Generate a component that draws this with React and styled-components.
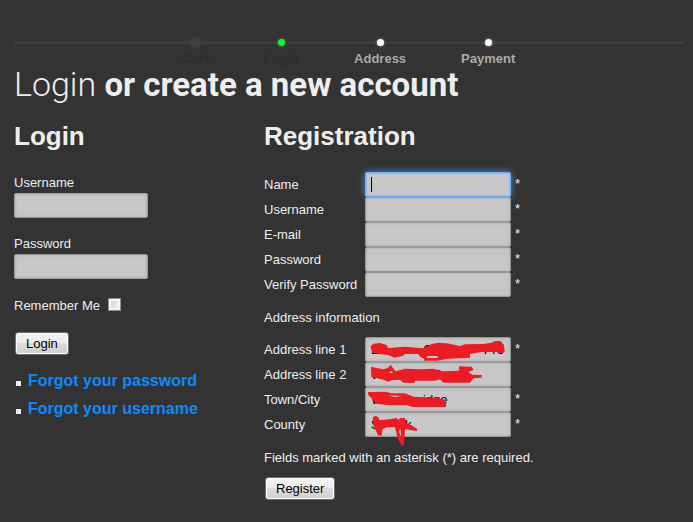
import React from 'react';
import styled, { createGlobalStyle, css } from 'styled-components';

const GlobalStyle = createGlobalStyle`
  * { box-sizing: border-box; }
  body {
    margin: 0;
    background: #333;
    color: #eee;
    font: 13px/16px "Liberation Sans", Arial, sans-serif;
  }
`;

const Page = styled.main`
  padding: 38px 9px 20px 14px;
`;

const Steps = styled.ol`
  list-style: none;
  margin: 0;
  padding: 0;
  display: flex;
  justify-content: center;
  gap: 55px;
  background: linear-gradient(#3a3a3a, #404040) 0 3px / 100% 3px no-repeat;
`;

const dots = {
  done: css`background: #404040; box-shadow: 0 0 0 2px #404040;`,
  current: css`background: #0f2; box-shadow: 0 0 3px #777;`,
  next: css`background: #fff; box-shadow: 0 0 3px #999;`,
};

const Step = styled.li`
  display: flex;
  flex-direction: column;
  align-items: center;
  gap: 6px;
  padding-top: 1px;
  font-weight: bold;
  line-height: 14px;
  color: ${(p) => (p.$state === 'next' ? '#aaa' : '#2e2e2e')};

  &::before {
    content: "";
    width: 7px;
    height: 7px;
    border-radius: 50%;
    ${(p) => dots[p.$state]}
  }
`;

const Title = styled.h1`
  margin: 0;
  font: bold 33px/36px Roboto, "Liberation Sans", sans-serif;
`;

const Thin = styled.span`
  font-weight: 300;
  font-size: 34px;
`;

const Columns = styled.div`
  display: grid;
  grid-template-columns: 250px 1fr;
  margin-top: 18px;
`;

const Heading = styled.h2`
  margin: 0 0 21px;
  font-size: 26px;
  line-height: 30px;
`;

const LoginForm = styled.form`
  padding-top: 3px;
`;

const Stacked = styled.div`
  display: flex;
  flex-direction: column;
  align-items: flex-start;
  gap: 2px;
  margin-bottom: 18px;
`;

const TextInput = styled.input`
  width: ${(p) => (p.$wide ? 146 : 134)}px;
  height: 25px;
  padding: 0 5px;
  border: 1px solid #999;
  border-radius: 2px;
  background: #c7c7c7;
  box-shadow: inset 0 0 3px #aaa;
  color: #000;
  font: inherit;
  outline: none;
  ${(p) => p.$active && css`
    border-color: #6ab4ff;
    box-shadow: inset 0 0 1px 1px #7fbcf8, 0 0 7px #4b8fd0;
  `}
`;

const Remember = styled.div`
  display: flex;
  align-items: flex-start;
  gap: 8px;
  padding-top: 1px;
  margin-bottom: 18px;
`;

const Checkbox = styled.input`
  appearance: none;
  width: 13px;
  height: 13px;
  margin: 0;
  border: 1px solid #8e8f8f;
  background: linear-gradient(135deg, #ccd0d5, #f6f6f6);
  box-shadow: inset 0 0 0 2px #f4f4f4;
`;

const Button = styled.button`
  display: block;
  margin: 1px;
  height: 23px;
  padding: 0 10px;
  border: 1px solid #707070;
  border-radius: 3px;
  background: linear-gradient(#f3f3f3 0%, #ebebeb 50%, #ddd 50%, #cfcfcf 100%);
  box-shadow: inset 0 0 0 1px #fcfcfc;
  color: #000;
  font: 13px/21px "Liberation Sans", Arial, sans-serif;
`;

const Links = styled.ul`
  list-style: none;
  margin: 12px 0 0;
  padding: 0;
  font-size: 16px;
  line-height: 28px;
  font-weight: bold;
`;

const LinkItem = styled.li`
  display: flex;
  align-items: center;
  gap: 7px;
  padding-left: 2px;

  &::before {
    content: "";
    width: 5px;
    height: 5px;
    margin-top: 4px;
    background: #eee;
  }
`;

const Link = styled.a`
  color: #0a8cff;
  text-decoration: none;
`;

const Fields = styled.div`
  position: relative;
`;

const Row = styled.div`
  display: grid;
  grid-template-columns: 101px auto 1fr;
  align-items: center;
  height: 25px;
`;

const Star = styled.span`
  padding-left: 4px;
  height: 16px;
  align-self: start;
  margin-top: 4px;
`;

const Caret = styled.span`
  position: absolute;
  left: 107px;
  top: 5px;
  width: 1px;
  height: 15px;
  background: #000;
`;

const Note = styled.p`
  margin: 13px 0 11px;
`;

const Scribble = styled.svg`
  position: absolute;
  left: 100px;
  top: -1px;
  pointer-events: none;
`;

function Field({ id, label, required, ...rest }) {
  return (
    <Row>
      <label htmlFor={id}>{label}</label>
      <TextInput id={id} $wide {...rest} />
      {required && <Star>*</Star>}
    </Row>
  );
}

function RedMarker() {
  return (
    <Scribble width="150" height="112" viewBox="27 18 450 336" fill="#ed1c24" fillRule="evenodd" aria-hidden="true">
      <path d="M46 50L55 41L75 39L95 45L100 54L150 50L205 55L230 42L250 38L275 40L315 48L330 43L385 42L410 38L420 33L437 33L447 45L449 65L440 70L425 66L380 66L345 72L345 83L280 86L245 92L208 92L207 86L195 80L190 72L150 72L145 77L118 83L100 75L70 72L52 67ZM216 78H248V84H216Z" />
      <path d="M48 110L85 118L98 114L107 104L114 114L122 124L150 116L200 118L235 116L262 124L312 122L312 109L350 110L356 120L340 126L352 134L380 135L380 143L355 145L345 158L265 158L255 148L240 152L180 152L178 159L145 158L135 150L113 150L100 155L88 150L65 144L49 142ZM102 128L108 122L114 130Z" />
      <path d="M38 186L90 185L110 190L150 190L175 200L210 202L250 204L273 210L273 231L172 231L155 226L110 226L65 222L50 205L40 196ZM100 196L140 198L120 201Z" />
      <path d="M53 262L62 257L70 262L74 270L105 268L125 263L130 270L135 264L150 264L155 280L168 285L186 296L186 303L150 298L147 346L140 348L128 325L120 292L95 292L82 298L80 316L70 317L62 300L55 285ZM131 302L137 298L138 322Z" />
    </Scribble>
  );
}

const gap = (n) => '\u00a0'.repeat(n);
const line1 = `E${gap(12)}O${gap(14)}Pro`;
const line2 = `W${gap(13)}M`;
const town = `W${gap(11)}idge`;
const county = `S${gap(7)}k`;

const steps = [
  ['Cart', 'done'],
  ['Login', 'current'],
  ['Address', 'next'],
  ['Payment', 'next'],
];

export default function App() {
  return (
    <>
      <GlobalStyle />
      <Page>
        <Steps>
          {steps.map(([name, state]) => (
            <Step key={name} $state={state}>{name}</Step>
          ))}
        </Steps>
        <Title><Thin>Login</Thin> or create a new account</Title>
        <Columns>
          <section>
            <Heading>Login</Heading>
            <LoginForm>
              <Stacked>
                <label htmlFor="user">Username</label>
                <TextInput id="user" />
              </Stacked>
              <Stacked>
                <label htmlFor="pass">Password</label>
                <TextInput id="pass" type="password" />
              </Stacked>
              <Remember>
                <label htmlFor="remember">Remember Me</label>
                <Checkbox id="remember" type="checkbox" />
              </Remember>
              <Button type="button">Login</Button>
            </LoginForm>
            <Links>
              <LinkItem><Link href="#password">Forgot your password</Link></LinkItem>
              <LinkItem><Link href="#username">Forgot your username</Link></LinkItem>
            </Links>
          </section>
          <section>
            <Heading>Registration</Heading>
            <form>
              <Fields>
                <Field id="name" label="Name" required $active />
                <Field id="newuser" label="Username" required />
                <Field id="email" label="E-mail" required />
                <Field id="newpass" label="Password" type="password" required />
                <Field id="verify" label="Verify Password" type="password" required />
                <Caret />
              </Fields>
              <Note>Address information</Note>
              <Fields>
                <Field id="line1" label="Address line 1" defaultValue={line1} required />
                <Field id="line2" label="Address line 2" defaultValue={line2} />
                <Field id="town" label="Town/City" defaultValue={town} required />
                <Field id="county" label="County" defaultValue={county} required />
                <RedMarker />
              </Fields>
              <Note>Fields marked with an asterisk (*) are required.</Note>
              <Button type="button">Register</Button>
            </form>
          </section>
        </Columns>
      </Page>
    </>
  );
}
